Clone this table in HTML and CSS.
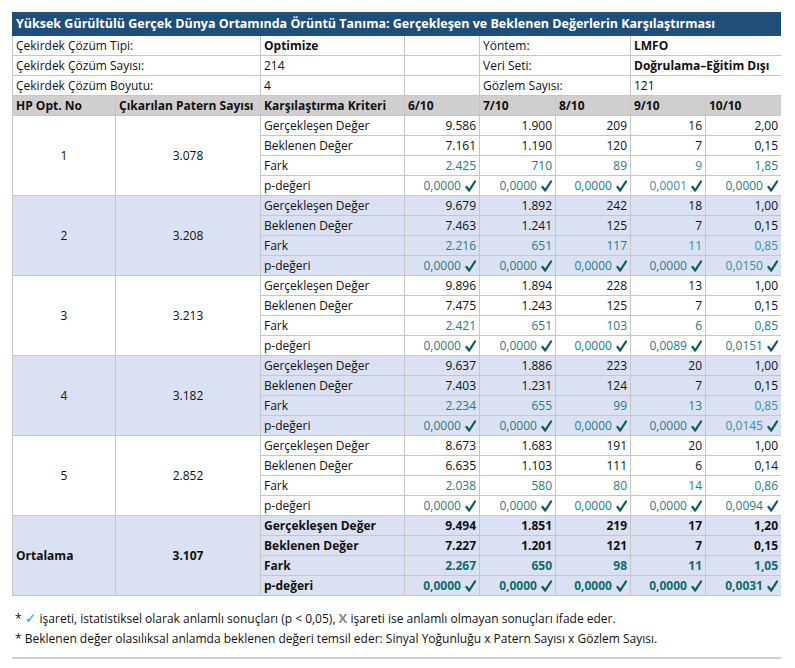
FILE: index.html
```html
<!DOCTYPE html>
<html lang="tr">
<head>
	<meta charset="UTF-8">
	<title>Gerçekleşen ve Beklenen Değerler</title>
	<link rel="stylesheet" href="styles.css">
</head>
<body>

	<table class="report">
		<colgroup>
			<col class="c1"><col class="c2"><col class="c3">
			<col class="c4"><col class="c5"><col class="c6"><col class="c7"><col class="c8">
		</colgroup>
		<tr class="title">
			<td colspan="8">Yüksek Gürültülü Gerçek Dünya Ortamında Örüntü Tanıma: Gerçekleşen ve Beklenen Değerlerin Karşılaştırması</td>
		</tr>
		<tr class="info">
			<td colspan="2">Çekirdek Çözüm Tipi:</td>
			<td class="b">Optimize</td>
			<td></td>
			<td colspan="2">Yöntem:</td>
			<td colspan="2" class="b">LMFO</td>
		</tr>
		<tr class="info">
			<td colspan="2">Çekirdek Çözüm Sayısı:</td>
			<td>214</td>
			<td></td>
			<td colspan="2">Veri Seti:</td>
			<td colspan="2" class="b">Doğrulama–Eğitim Dışı</td>
		</tr>
		<tr class="info">
			<td colspan="2">Çekirdek Çözüm Boyutu:</td>
			<td>4</td>
			<td></td>
			<td colspan="2">Gözlem Sayısı:</td>
			<td colspan="2">121</td>
		</tr>
		<tr class="head">
			<td>HP Opt. No</td>
			<td>Çıkarılan Patern Sayısı</td>
			<td>Karşılaştırma Kriteri</td>
			<td>6/10</td><td>7/10</td><td>8/10</td><td>9/10</td><td>10/10</td>
		</tr>

		<!-- 1 -->
		<tr>
			<td rowspan="4" class="mid">1</td>
			<td rowspan="4" class="mid">3.078</td>
			<td>Gerçekleşen Değer</td>
			<td class="num">9.586</td><td class="num">1.900</td><td class="num">209</td><td class="num">16</td><td class="num">2,00</td>
		</tr>
		<tr>
			<td>Beklenen Değer</td>
			<td class="num">7.161</td><td class="num">1.190</td><td class="num">120</td><td class="num">7</td><td class="num">0,15</td>
		</tr>
		<tr>
			<td>Fark</td>
			<td class="num teal">2.425</td><td class="num teal">710</td><td class="num teal">89</td><td class="num teal light">9</td><td class="num teal">1,85</td>
		</tr>
		<tr>
			<td>p-değeri</td>
			<td class="num teal">0,0000 <svg class="ok" viewBox="0 0 11 12"><path d="M1.5 7 L4.2 10.5 L10 1.5"/></svg></td>
			<td class="num teal">0,0000 <svg class="ok" viewBox="0 0 11 12"><path d="M1.5 7 L4.2 10.5 L10 1.5"/></svg></td>
			<td class="num teal">0,0000 <svg class="ok" viewBox="0 0 11 12"><path d="M1.5 7 L4.2 10.5 L10 1.5"/></svg></td>
			<td class="num teal light">0,0001 <svg class="ok" viewBox="0 0 11 12"><path d="M1.5 7 L4.2 10.5 L10 1.5"/></svg></td>
			<td class="num teal">0,0000 <svg class="ok" viewBox="0 0 11 12"><path d="M1.5 7 L4.2 10.5 L10 1.5"/></svg></td>
		</tr>

		<!-- 2 -->
		<tr class="alt">
			<td rowspan="4" class="mid">2</td>
			<td rowspan="4" class="mid">3.208</td>
			<td>Gerçekleşen Değer</td>
			<td class="num">9.679</td><td class="num">1.892</td><td class="num">242</td><td class="num">18</td><td class="num">1,00</td>
		</tr>
		<tr class="alt">
			<td>Beklenen Değer</td>
			<td class="num">7.463</td><td class="num">1.241</td><td class="num">125</td><td class="num">7</td><td class="num">0,15</td>
		</tr>
		<tr class="alt">
			<td>Fark</td>
			<td class="num teal">2.216</td><td class="num teal">651</td><td class="num teal">117</td><td class="num teal light">11</td><td class="num teal light">0,85</td>
		</tr>
		<tr class="alt">
			<td>p-değeri</td>
			<td class="num teal">0,0000 <svg class="ok" viewBox="0 0 11 12"><path d="M1.5 7 L4.2 10.5 L10 1.5"/></svg></td>
			<td class="num teal">0,0000 <svg class="ok" viewBox="0 0 11 12"><path d="M1.5 7 L4.2 10.5 L10 1.5"/></svg></td>
			<td class="num teal">0,0000 <svg class="ok" viewBox="0 0 11 12"><path d="M1.5 7 L4.2 10.5 L10 1.5"/></svg></td>
			<td class="num teal">0,0000 <svg class="ok" viewBox="0 0 11 12"><path d="M1.5 7 L4.2 10.5 L10 1.5"/></svg></td>
			<td class="num teal light">0,0150 <svg class="ok" viewBox="0 0 11 12"><path d="M1.5 7 L4.2 10.5 L10 1.5"/></svg></td>
		</tr>

		<!-- 3 -->
		<tr>
			<td rowspan="4" class="mid">3</td>
			<td rowspan="4" class="mid">3.213</td>
			<td>Gerçekleşen Değer</td>
			<td class="num">9.896</td><td class="num">1.894</td><td class="num">228</td><td class="num">13</td><td class="num">1,00</td>
		</tr>
		<tr>
			<td>Beklenen Değer</td>
			<td class="num">7.475</td><td class="num">1.243</td><td class="num">125</td><td class="num">7</td><td class="num">0,15</td>
		</tr>
		<tr>
			<td>Fark</td>
			<td class="num teal">2.421</td><td class="num teal">651</td><td class="num teal">103</td><td class="num teal">6</td><td class="num teal">0,85</td>
		</tr>
		<tr>
			<td>p-değeri</td>
			<td class="num teal">0,0000 <svg class="ok" viewBox="0 0 11 12"><path d="M1.5 7 L4.2 10.5 L10 1.5"/></svg></td>
			<td class="num teal">0,0000 <svg class="ok" viewBox="0 0 11 12"><path d="M1.5 7 L4.2 10.5 L10 1.5"/></svg></td>
			<td class="num teal">0,0000 <svg class="ok" viewBox="0 0 11 12"><path d="M1.5 7 L4.2 10.5 L10 1.5"/></svg></td>
			<td class="num teal">0,0089 <svg class="ok" viewBox="0 0 11 12"><path d="M1.5 7 L4.2 10.5 L10 1.5"/></svg></td>
			<td class="num teal">0,0151 <svg class="ok" viewBox="0 0 11 12"><path d="M1.5 7 L4.2 10.5 L10 1.5"/></svg></td>
		</tr>

		<!-- 4 -->
		<tr class="alt">
			<td rowspan="4" class="mid">4</td>
			<td rowspan="4" class="mid">3.182</td>
			<td>Gerçekleşen Değer</td>
			<td class="num">9.637</td><td class="num">1.886</td><td class="num">223</td><td class="num">20</td><td class="num">1,00</td>
		</tr>
		<tr class="alt">
			<td>Beklenen Değer</td>
			<td class="num">7.403</td><td class="num">1.231</td><td class="num">124</td><td class="num">7</td><td class="num">0,15</td>
		</tr>
		<tr class="alt">
			<td>Fark</td>
			<td class="num teal">2.234</td><td class="num teal">655</td><td class="num teal">99</td><td class="num teal">13</td><td class="num teal light">0,85</td>
		</tr>
		<tr class="alt">
			<td>p-değeri</td>
			<td class="num teal">0,0000 <svg class="ok" viewBox="0 0 11 12"><path d="M1.5 7 L4.2 10.5 L10 1.5"/></svg></td>
			<td class="num teal">0,0000 <svg class="ok" viewBox="0 0 11 12"><path d="M1.5 7 L4.2 10.5 L10 1.5"/></svg></td>
			<td class="num teal">0,0000 <svg class="ok" viewBox="0 0 11 12"><path d="M1.5 7 L4.2 10.5 L10 1.5"/></svg></td>
			<td class="num teal">0,0000 <svg class="ok" viewBox="0 0 11 12"><path d="M1.5 7 L4.2 10.5 L10 1.5"/></svg></td>
			<td class="num teal light">0,0145 <svg class="ok" viewBox="0 0 11 12"><path d="M1.5 7 L4.2 10.5 L10 1.5"/></svg></td>
		</tr>

		<!-- 5 -->
		<tr>
			<td rowspan="4" class="mid">5</td>
			<td rowspan="4" class="mid">2.852</td>
			<td>Gerçekleşen Değer</td>
			<td class="num">8.673</td><td class="num">1.683</td><td class="num">191</td><td class="num">20</td><td class="num">1,00</td>
		</tr>
		<tr>
			<td>Beklenen Değer</td>
			<td class="num">6.635</td><td class="num">1.103</td><td class="num">111</td><td class="num">6</td><td class="num">0,14</td>
		</tr>
		<tr>
			<td>Fark</td>
			<td class="num teal">2.038</td><td class="num teal">580</td><td class="num teal">80</td><td class="num teal">14</td><td class="num teal">0,86</td>
		</tr>
		<tr>
			<td>p-değeri</td>
			<td class="num teal">0,0000 <svg class="ok" viewBox="0 0 11 12"><path d="M1.5 7 L4.2 10.5 L10 1.5"/></svg></td>
			<td class="num teal">0,0000 <svg class="ok" viewBox="0 0 11 12"><path d="M1.5 7 L4.2 10.5 L10 1.5"/></svg></td>
			<td class="num teal">0,0000 <svg class="ok" viewBox="0 0 11 12"><path d="M1.5 7 L4.2 10.5 L10 1.5"/></svg></td>
			<td class="num teal">0,0000 <svg class="ok" viewBox="0 0 11 12"><path d="M1.5 7 L4.2 10.5 L10 1.5"/></svg></td>
			<td class="num teal">0,0094 <svg class="ok" viewBox="0 0 11 12"><path d="M1.5 7 L4.2 10.5 L10 1.5"/></svg></td>
		</tr>

		<!-- Ortalama -->
		<tr class="alt avg">
			<td rowspan="4" class="left-mid">Ortalama</td>
			<td rowspan="4" class="mid">3.107</td>
			<td>Gerçekleşen Değer</td>
			<td class="num">9.494</td><td class="num">1.851</td><td class="num">219</td><td class="num">17</td><td class="num">1,20</td>
		</tr>
		<tr class="alt avg">
			<td>Beklenen Değer</td>
			<td class="num">7.227</td><td class="num">1.201</td><td class="num">121</td><td class="num">7</td><td class="num">0,15</td>
		</tr>
		<tr class="alt avg">
			<td>Fark</td>
			<td class="num teal">2.267</td><td class="num teal">650</td><td class="num teal">98</td><td class="num teal">11</td><td class="num teal">1,05</td>
		</tr>
		<tr class="alt avg">
			<td>p-değeri</td>
			<td class="num teal">0,0000 <svg class="ok" viewBox="0 0 11 12"><path d="M1.5 7 L4.2 10.5 L10 1.5"/></svg></td>
			<td class="num teal">0,0000 <svg class="ok" viewBox="0 0 11 12"><path d="M1.5 7 L4.2 10.5 L10 1.5"/></svg></td>
			<td class="num teal">0,0000 <svg class="ok" viewBox="0 0 11 12"><path d="M1.5 7 L4.2 10.5 L10 1.5"/></svg></td>
			<td class="num teal">0,0000 <svg class="ok" viewBox="0 0 11 12"><path d="M1.5 7 L4.2 10.5 L10 1.5"/></svg></td>
			<td class="num teal">0,0031 <svg class="ok" viewBox="0 0 11 12"><path d="M1.5 7 L4.2 10.5 L10 1.5"/></svg></td>
		</tr>
	</table>

	<div class="notes">
		<p>* <span class="tick">✓</span> işareti, istatistiksel olarak anlamlı sonuçları (p &lt; 0,05), <span class="cross">X</span> işareti ise anlamlı olmayan sonuçları ifade eder.</p>
		<p>* Beklenen değer olasılıksal anlamda beklenen değeri temsil eder: Sinyal Yoğunluğu x Patern Sayısı x Gözlem Sayısı.</p>
	</div>

</body>
</html>
```

FILE: styles.css
```css
body {
	margin: 12px 14px 0 12px;
	font-family: "Open Sans", "Noto Sans", sans-serif;
	font-size: 12px;
	color: #111;
	background: #fff;
}

.report {
	width: 769px;
	border-collapse: collapse;
	table-layout: fixed;
}

.c1 { width: 103px; }
.c2 { width: 145px; }
.c3 { width: 144px; }
.c4 { width: 75px; }
.c5 { width: 76px; }
.c6 { width: 75px; }
.c7 { width: 75px; }
.c8 { width: 76px; }

.report td {
	height: 19px;
	padding: 0 3px;
	border: 1px solid #c6c6c6;
	white-space: nowrap;
	overflow: hidden;
	line-height: 18px;
}

.report .title td {
	height: 22px;
	background: #1f4e78;
	color: #fff;
	font-weight: bold;
	font-size: 12.5px;
	border-color: #1f4e78;
}

.b {
	font-weight: bold;
}

.head td {
	background: #d0cece;
	font-weight: bold;
}

.mid {
	text-align: center;
}

.left-mid {
	font-weight: bold;
}

.num {
	text-align: right;
}

.teal {
	color: #1d7d88;
}

.light {
	color: #2c93b0;
}

.ok {
	width: 11px;
	height: 12px;
	vertical-align: -2px;
	margin-left: 1px;
}

.ok path {
	fill: none;
	stroke: #0c5d60;
	stroke-width: 2.3;
	stroke-linecap: round;
	stroke-linejoin: round;
}

.alt td {
	background: #d9e1f2;
}

.avg td {
	font-weight: bold;
}

.avg .teal {
	color: #0e6b73;
}

.notes {
	margin-top: 12px;
	padding: 0 3px 8px;
	border-bottom: 2px solid #d0d0d0;
}

.notes p {
	margin: 0;
	line-height: 20px;
}

.tick {
	color: #2aa6e0;
	font-family: "DejaVu Sans", sans-serif;
	font-size: 14px;
}

.cross {
	color: #8a8a8a;
	font-weight: bold;
	font-size: 13px;
}
```
